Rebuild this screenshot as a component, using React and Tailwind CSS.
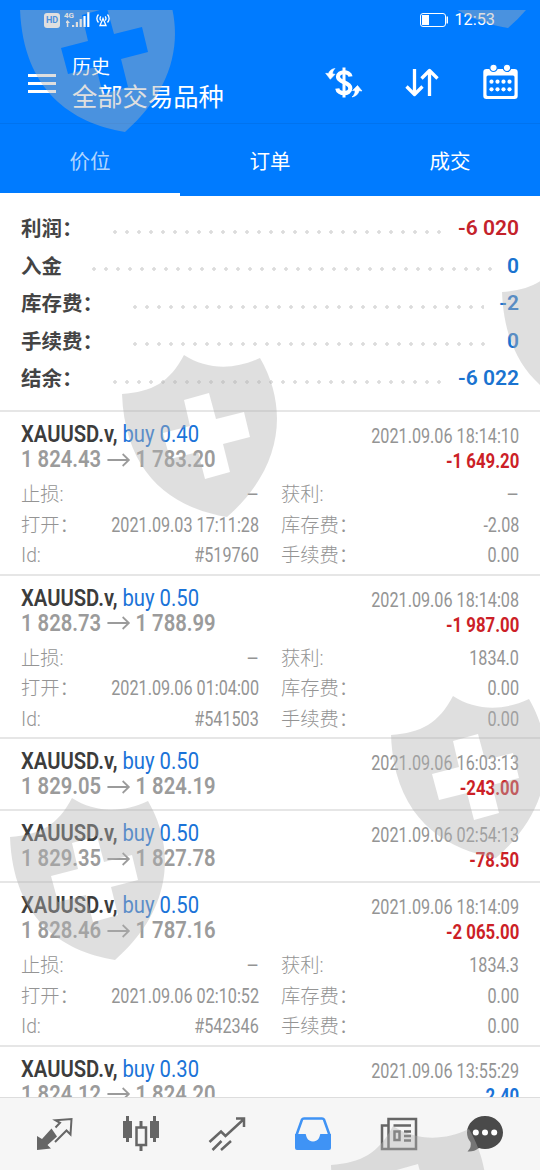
import React from 'react';

const summary = [
  { label: '利润：', value: '-6 020', negative: true },
  { label: '入金', value: '0' },
  { label: '库存费：', value: '-2' },
  { label: '手续费：', value: '0' },
  { label: '结余：', value: '-6 022' },
];

const deals = [
  {
    volume: '0.40', from: '1 824.43', to: '1 783.20', time: '2021.09.06 18:14:10', profit: '-1 649.20',
    details: { tp: '–', opened: '2021.09.03 17:11:28', swap: '-2.08', id: '#519760' },
  },
  {
    volume: '0.50', from: '1 828.73', to: '1 788.99', time: '2021.09.06 18:14:08', profit: '-1 987.00',
    details: { tp: '1834.0', opened: '2021.09.06 01:04:00', swap: '0.00', id: '#541503' },
  },
  { volume: '0.50', from: '1 829.05', to: '1 824.19', time: '2021.09.06 16:03:13', profit: '-243.00' },
  { volume: '0.50', from: '1 829.35', to: '1 827.78', time: '2021.09.06 02:54:13', profit: '-78.50' },
  {
    volume: '0.50', from: '1 828.46', to: '1 787.16', time: '2021.09.06 18:14:09', profit: '-2 065.00',
    details: { tp: '1834.3', opened: '2021.09.06 02:10:52', swap: '0.00', id: '#542346' },
  },
  { volume: '0.30', from: '1 824.12', to: '1 824.20', time: '2021.09.06 13:55:29', profit: '2.40' },
];

// x / y of every shield stamped over the page
const shields = [
  [13, -40],
  [396, -144],
  [495, 243],
  [115, 345],
  [384, 686],
  [3, 788],
  [324, 1116],
];

const StatusBar = () => (
  <div className="flex h-10 items-center pl-11 pr-[45px] text-white">
    <span className="flex h-[15px] w-4 items-center justify-center rounded-[3px] bg-white text-[9px] font-bold leading-none text-[#007bff]">HD</span>
    <div className="ml-1 flex h-4 items-end">
      <span className="self-start text-[8px] font-bold leading-none">4G</span>
      <svg className="-ml-2" width="24" height="16" viewBox="0 0 24 16" fill="currentColor">
        <path d="M1.500 8L4 11H2.300V15H.8V11H-1Z" />
        <rect x="6" y="13" width="2.200" height="2" />
        <rect x="9.800" y="10" width="2.200" height="5" />
        <rect x="13.600" y="7" width="2.200" height="8" />
        <rect x="17.400" y="4" width="2.200" height="11" />
        <rect x="21.200" y="0" width="2.200" height="15" />
      </svg>
    </div>
    <svg className="ml-1.5" width="14" height="14" viewBox="0 0 14 14" fill="none" stroke="currentColor" strokeWidth="1.300">
      <path d="M2.500 1.500Q-.8 5.500 2.500 9.500M11.500 1.500Q14.800 5.500 11.500 9.500M4.800 3.300Q3.200 5.500 4.800 7.500M9.200 3.300Q10.800 5.500 9.200 7.500" />
      <path d="M7 5.500L4 12.500H10Z" />
    </svg>
    <svg className="ml-auto" width="28" height="14" viewBox="0 0 28 14">
      <rect x=".5" y=".5" width="25" height="13" rx="2.500" fill="none" stroke="white" />
      <rect x="2" y="2" width="7" height="10" fill="white" />
      <rect x="26.500" y="3.500" width="1.500" height="7" fill="white" />
    </svg>
    <span className="ml-1.5 pt-px text-[16.300px] leading-none">12:53</span>
  </div>
);

const CurrencyIcon = () => (
  <svg width="40" height="40" viewBox="0 0 40 40" fill="none" stroke="white" strokeWidth="4.200">
    <path d="M26.500 13.500C25.500 7.800 14 7.800 14 13.800C14 20 26.300 18.500 26.300 25.200C26.300 32 14 31.500 13.300 25.500" />
    <path d="M20 4.500V34.500" strokeWidth="3" />
    <path d="M1.700 10.300L4.500 10.500C5.200 7.800 7.500 6 11 5.500C9 7.200 8.500 9 8.700 11L11 11.300L6.300 16.300ZM33.500 22.500L38 28L35 27.700C34.500 31 31.500 33.600 28 34C30.300 32 31.300 30 31 27.600L28.500 27.500Z" fill="white" strokeWidth=".6" />
  </svg>
);

const SortIcon = () => (
  <svg width="40" height="40" viewBox="0 0 40 40" fill="none" stroke="white" strokeWidth="3.300">
    <path d="M12.500 6V31M4.500 23.500L12.500 31.500L20.500 23.500M27.500 33V8M19.500 15.500L27.500 7.500L35.500 15.500" strokeLinejoin="round" />
  </svg>
);

const CalendarIcon = () => (
  <svg width="40" height="40" viewBox="0 0 40 40" fill="white">
    <path fillRule="evenodd" d="M6.500 6H34.500Q37.700 6 37.700 9V33Q37.700 36 34.500 36H6.500Q3.300 36 3.300 33V9Q3.300 6 6.500 6ZM8 12.500Q6.500 12.500 6.500 14V31.500Q6.500 33 8 33H33Q34.500 33 34.500 31.500V14Q34.500 12.500 33 12.500Z" />
    {[13.5, 27].map(x => (
      <circle key={x} cx={x} cy="4.800" r="3.700" stroke="#007bff" strokeWidth="1.200" />
    ))}
    {[18.7, 26.3].map(y =>
      [11, 17, 23, 29].map(x => <circle key={`${x}-${y}`} cx={x + 0.5} cy={y} r="2.100" />)
    )}
  </svg>
);

const Header = () => (
  <header className="bg-[#007bff] text-white">
    <StatusBar />
    <div className="flex h-21 items-center border-b border-[#0073ef] pl-7 pr-5 pt-[3px]">
      <div className="flex w-7 flex-col gap-[5px]">
        <span className="h-[3px] bg-white" />
        <span className="h-[3px] bg-white" />
        <span className="h-[3px] bg-white" />
      </div>
      <div className="ml-4 flex-1 pt-[3px]">
        <div className="text-[19px] leading-[26px]">历史</div>
        <div className="text-[25.300px] leading-[34px]">全部交易品种</div>
      </div>
      <div className="flex gap-[38px]">
        <CurrencyIcon />
        <SortIcon />
        <CalendarIcon />
      </div>
    </div>
    <nav className="grid h-[72px] grid-cols-3 text-center text-[20.500px] leading-[69px]">
      <div className="h-[72px] border-b-[3px] border-white pt-1 text-white/70">价位</div>
      <div className="pt-1">订单</div>
      <div className="pt-1">成交</div>
    </nav>
  </header>
);

const Summary = () => (
  <section className="h-[214px] px-[21px] pt-[15px]">
    {summary.map(({ label, value, negative }) => (
      <div key={label} className="flex h-[37.500px] items-center font-bold">
        <span className="text-[20.500px] text-[#444444]">{label}</span>
        <span className="ml-[26px] mr-[15px] mt-1 h-3 flex-1 bg-[radial-gradient(circle,#dcdcdc_1.500px,transparent_2px)] bg-[length:12px_12px] bg-repeat-x" />
        <span className={negative ? 'mb-0.5 text-[21px] font-semibold text-[#c4222b]' : 'mb-0.5 text-[21px] font-semibold text-[#1a73d0]'}>{value}</span>
      </div>
    ))}
  </section>
);

const Arrow = () => (
  <svg className="ml-[7px] mr-1.5 inline-block -translate-y-px" width="26" height="14" viewBox="0 0 26 14" fill="none" stroke="currentColor" strokeWidth="2">
    <path d="M0 7H24.500M17.500 1L24.500 7L17.500 13" />
  </svg>
);

const Field = ({ label, value }) => (
  <div className="flex items-center justify-between">
    <span className="text-[19.300px] font-light">{label}</span>
    {value === '–' ? (
      <span className="text-[19.500px]">{value}</span>
    ) : (
      <span className="mb-0.5 origin-right scale-x-[.83] text-[19.500px]">{value}</span>
    )}
  </div>
);

const Deal = ({ deal }) => {
  const { details } = deal;
  return (
    <article className="shrink-0 border-t-2 border-[#e6e6e6] px-[21px] text-[#949494]">
      <div className="flex h-[70px] justify-between whitespace-nowrap pt-[9px]">
        <div className="w-0 origin-left scale-x-[.88]">
          <div className="text-[23px] leading-[27px] text-[#1a73d8]">
            <span className="font-semibold text-[#3c3c3c]">XAUUSD.v,</span> buy {deal.volume}
          </div>
          <div className="text-[23px] font-semibold leading-6 text-[#9b9b9b]">
            {deal.from}<Arrow />{deal.to}
          </div>
        </div>
        <div className="flex flex-col items-end pt-[3px]">
          <div className="origin-right scale-x-[.83] text-[19.500px] leading-[26px]">{deal.time}</div>
          <div className={deal.profit.startsWith('-') ? 'origin-right scale-x-[.86] text-[19.500px] font-bold leading-6 text-[#cc1f27]' : 'origin-right scale-x-[.86] text-[19.500px] font-bold leading-6 text-[#1a73d8]'}>
            {deal.profit}
          </div>
        </div>
      </div>
      {details && (
        <div className="-mt-[1.500px] grid h-[93px] grid-cols-[238px_238px] auto-rows-[30.500px] gap-x-[22px] whitespace-nowrap">
          <Field label="止损:" value="–" />
          <Field label="获利:" value={details.tp} />
          <Field label="打开：" value={details.opened} />
          <Field label="库存费：" value={details.swap} />
          <Field label="Id:" value={details.id} />
          <Field label="手续费：" value="0.00" />
        </div>
      )}
    </article>
  );
};

const NavIcon = ({ children, className = 'text-[#666666]' }) => (
  <div className={`flex flex-1 justify-center ${className}`}>
    <svg width="40" height="40" viewBox="0 0 40 40" fill="none" stroke="currentColor" strokeWidth="2.500">
      {children}
    </svg>
  </div>
);

const BottomNav = () => (
  <nav className="flex h-[73px] shrink-0 items-center border-t border-[#dddddd] bg-[#f6f6f6] px-3 pb-px">
    <NavIcon>
      <path d="M2 22V36L16 34.500L12.500 31L22 22.500L16.500 14.500L7 25Z" fill="currentColor" stroke="none" />
      <path d="M20.500 13.500L25 8.800L20.500 6.300L36.500 5L35.500 20.500L31.500 16.500L20 28" strokeWidth="2" />
    </NavIcon>
    <NavIcon>
      <path d="M6.500 2V28M33.500 2V28M20 7V14M20 31V37" strokeWidth="3" />
      <path d="M2 7H11V24H2ZM29 7H38V24H29Z" fill="currentColor" stroke="none" />
      <rect x="15.500" y="13.500" width="9.500" height="17.500" />
    </NavIcon>
    <NavIcon>
      <path d="M2.500 28L14 17.500L18.500 22L37 5M29 4.500H37V13M5.500 36L14.500 27M14 36L24 27" />
    </NavIcon>
    <NavIcon className="text-[#3f93f5]">
      <path d="M3.500 21L9 5.500Q9.500 4.500 11 4.500H29Q30.500 4.500 31 5.500L36.500 21" />
      <path d="M2 20H12.500C13 20 13 22 14 24C16 28.500 24 28.500 26 24C27 22 27 20 27.500 20H38V34Q38 36 36 36H4Q2 36 2 34Z" fill="currentColor" stroke="none" />
    </NavIcon>
    <NavIcon>
      <path d="M9.500 5H37V35H9.500ZM9.500 11.500H3V35H9.500" />
      <path d="M14.500 11.500H32M25 17.500H32M25 22H32M25 26.500H32" />
      <rect x="15.500" y="17.500" width="5" height="8.500" />
    </NavIcon>
    <NavIcon className="text-[#4a4a4a]">
      <path d="M20 2C30 2 38 9.500 38 18.500C38 28 30 35 20 35Q16.500 35 14 34Q9 38 2.500 37.500Q7 33 5.500 28Q2 24 2 18.500C2 9.500 10 2 20 2Z" fill="currentColor" stroke="none" />
      {[10.8, 20, 29.2].map(x => (
        <circle key={x} cx={x} cy="18.500" r="3" fill="white" stroke="none" />
      ))}
    </NavIcon>
  </nav>
);

const Shields = () => (
  <svg className="pointer-events-none absolute inset-x-0 top-[10px]" width="540" height="1160" viewBox="0 10 540 1160" fill="#b2b2b2" fillOpacity=".416">
    {shields.map(([x, y]) => (
      <path
        key={`${x}-${y}`}
        transform={`translate(${x} ${y})`}
        fillRule="evenodd"
        d="M7 49C37 47 55 37 69 10C92 25 120 25 145 13C175 65 166 125 112 172C58 163 10 130 7 49ZM69 55L75 81L48 88L55 114L83 107L90 134L115 127L108 99L135 92L129 67L101 74L94 48Z"
      />
    ))}
  </svg>
);

const App = () => (
  <div className="relative flex h-[1170px] w-[540px] flex-col overflow-hidden bg-white font-[Roboto,'Noto_Sans_CJK_SC',sans-serif]">
    <Header />
    <Summary />
    <main className="flex min-h-0 flex-1 flex-col overflow-hidden">
      {deals.map(deal => (
        <Deal key={`${deal.time}-${deal.from}`} deal={deal} />
      ))}
    </main>
    <BottomNav />
    <Shields />
  </div>
);

export default App;
